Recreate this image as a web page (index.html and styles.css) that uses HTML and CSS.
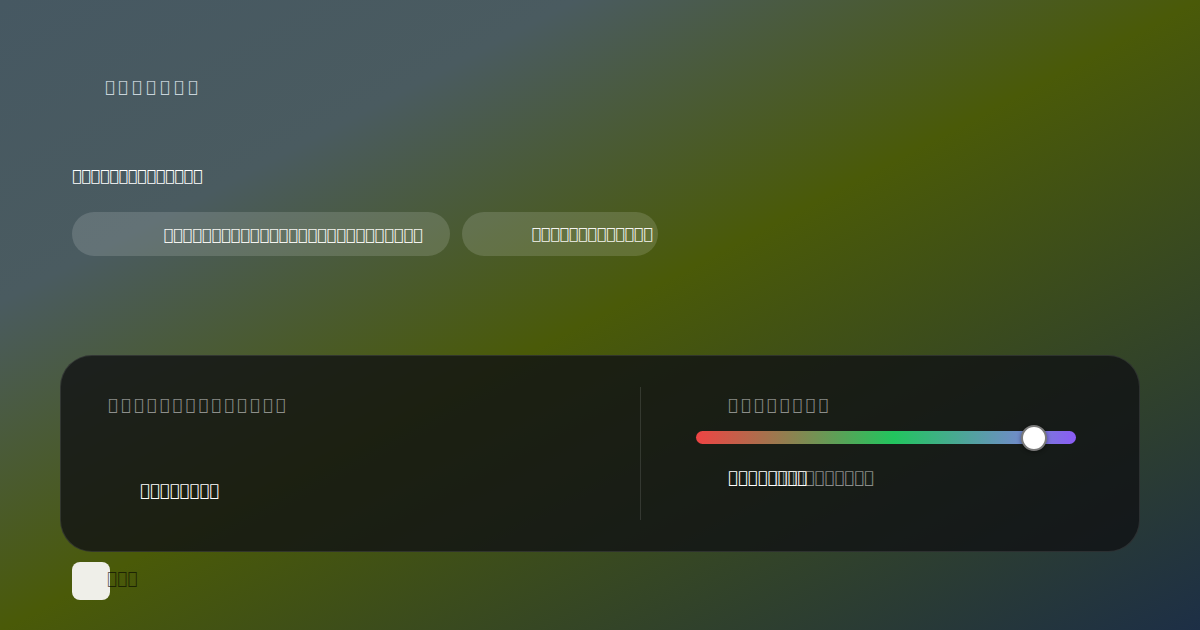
FILE: index.html
```html
<!DOCTYPE html>
<html lang="und">
<head>
<meta charset="utf-8">
<title>Settings</title>
<link rel="stylesheet" href="styles.css">
</head>
<body>
<main class="page">
  <header class="title"><i class="ico">&#xE0A1;</i>&#xE101;&#xE102;&#xE103;&#xE104;&#xE105;&#xE106;</header>

  <section class="mode">
    <h2 class="mode-label">&#xE111;&#xE112;&#xE113;&#xE114;&#xE115;&#xE116;&#xE117;&#xE118;&#xE119;&#xE11A;&#xE11B;&#xE11C;&#xE11D;&#xE11E;</h2>
    <div class="pills">
      <button class="pill pill-wide">&#xE121;&#xE122;&#xE123;&#xE124;&#xE125;&#xE126;&#xE127;&#xE128;&#xE129;&#xE12A;&#xE12B;&#xE12C;&#xE12D;&#xE12E;&#xE12F;&#xE130;&#xE131;&#xE132;&#xE133;&#xE134;&#xE135;&#xE136;&#xE137;&#xE138;&#xE139;&#xE13A;&#xE13B;</button>
      <button class="pill pill-narrow">&#xE141;&#xE142;&#xE143;&#xE144;&#xE145;&#xE146;&#xE147;&#xE148;&#xE149;&#xE14A;&#xE14B;&#xE14C;&#xE14D;</button>
    </div>
  </section>

  <section class="card">
    <div class="col col-left">
      <div class="card-label"><i class="ico">&#xE0A2;</i>&#xE151;&#xE152;&#xE153;&#xE154;&#xE155;&#xE156;&#xE157;&#xE158;&#xE159;&#xE15A;&#xE15B;&#xE15C;&#xE15D;</div>
      <div class="value">&#xE161;&#xE162;&#xE163;&#xE164;&#xE165;&#xE166;&#xE167;&#xE168;</div>
    </div>
    <div class="divider"></div>
    <div class="col col-right">
      <div class="card-label card-label-right"><i class="ico">&#xE0A3;</i>&#xE171;&#xE172;&#xE173;&#xE174;&#xE175;&#xE176;&#xE177;</div>
      <div class="slider">
        <div class="track"></div>
        <div class="thumb" style="left: 89%"></div>
      </div>
      <div class="readout">
        <span class="readout-main">&#xE181;&#xE182;&#xE183;&#xE184;&#xE185;&#xE186;&#xE187;&#xE188;</span>
        <span class="readout-hint">&#xE191;&#xE192;&#xE193;&#xE194;&#xE195;&#xE196;&#xE197;&#xE198;&#xE199;&#xE19A;</span>
      </div>
    </div>
  </section>

  <div class="toggle">
    <span class="toggle-box"></span>
    <span class="toggle-text">&#xE1A1;&#xE1A2;&#xE1A3;</span>
  </div>
</main>
</body>
</html>
```

FILE: styles.css
```css
* {
  box-sizing: border-box;
}

html, body {
  margin: 0;
  width: 1200px;
  height: 630px;
  overflow: hidden;
}

body {
  font-family: "DejaVu Sans", sans-serif;
  font-size: 16px;
  background: linear-gradient(to bottom right, #465862 0%, #4a5b60 24%, #4a5a08 50%, #1d2f46 100%);
  color: #fff;
}

/* icon glyphs sit in a fixed slot in front of their label */
.ico {
  display: inline-block;
  width: 13px;
  font-style: normal;
  font-weight: 400;
  font-size: 16px;
  letter-spacing: 0;
  font-family: "DejaVu Sans", sans-serif;
}

.page {
  padding: 77px 60px 0;
}

.title {
  padding-left: 45px;
  font-size: 16px;
  line-height: 20px;
  letter-spacing: 4.4px;
  color: rgba(225, 235, 242, 0.85);
}

.mode {
  margin-top: 69px;
  padding-left: 12px;
}

.mode-label {
  margin: 0;
  font-size: 15.5px;
  line-height: 20px;
  font-weight: 700;
  color: #fff;
}

.pills {
  display: flex;
  gap: 12px;
  margin-top: 26px;
}

.pill {
  display: flex;
  align-items: center;
  justify-content: center;
  height: 44px;
  padding: 0 0 0 64px;
  border: 0;
  border-radius: 22px;
  background: rgba(255, 255, 255, 0.14);
  color: #f4f4f0;
  font-family: inherit;
  font-size: 16px;
  white-space: nowrap;
}

.pill-wide {
  width: 378px;
}

.pill-narrow {
  width: 196px;
  font-size: 15.5px;
}

.card {
  display: grid;
  grid-template-columns: 579px 1px 1fr;
  margin-top: 99px;
  height: 197px;
  padding: 31px 0;
  border: 1px solid rgba(255, 255, 255, 0.1);
  border-radius: 32px;
  background: rgba(16, 18, 20, 0.8);
}

.divider {
  background: rgba(255, 255, 255, 0.12);
}

.col {
  padding-top: 8px;
}

.col-left {
  padding-left: 47px;
}

.col-right {
  padding: 8px 63px 0 55px;
}

.card-label {
  font-size: 16px;
  line-height: 20px;
  letter-spacing: 3.3px;
  color: rgba(255, 255, 255, 0.5);
}

.card-label-right {
  padding-left: 32px;
}

.value {
  margin-top: 66px;
  padding-left: 32px;
  font-size: 16.5px;
  line-height: 20px;
  color: #fff;
}

.slider {
  position: relative;
  margin-top: 16px;
  height: 13px;
}

.track {
  height: 13px;
  border-radius: 7px;
  background: linear-gradient(90deg, #ef4444 0%, #22c55e 52%, #6d8ec4 84%, #8b5cf6 100%);
}

.thumb {
  position: absolute;
  top: 50%;
  width: 26px;
  height: 26px;
  margin: -13px 0 0 -13px;
  border-radius: 50%;
  background: #fff;
  border: 2px solid #7a7a7a;
  box-shadow: 0 1px 4px rgba(0, 0, 0, 0.4);
}

.readout {
  position: relative;
  margin-top: 24px;
  padding-left: 32px;
  font-size: 16.5px;
  line-height: 20px;
}

.readout-main {
  color: #fff;
}

/* hint text is layered over the value */
.readout-hint {
  position: absolute;
  left: 79px;
  top: 0;
  color: rgba(255, 255, 255, 0.5);
}

.toggle {
  display: flex;
  align-items: flex-start;
  margin-top: 10px;
  padding-left: 12px;
}

.toggle-box {
  width: 38px;
  height: 38px;
  border-radius: 8px;
  background: #efefe9;
}

.toggle-text {
  margin: 6px 0 0 -3px;
  font-size: 17px;
  line-height: 20px;
  color: rgba(0, 0, 0, 0.6);
}
```
